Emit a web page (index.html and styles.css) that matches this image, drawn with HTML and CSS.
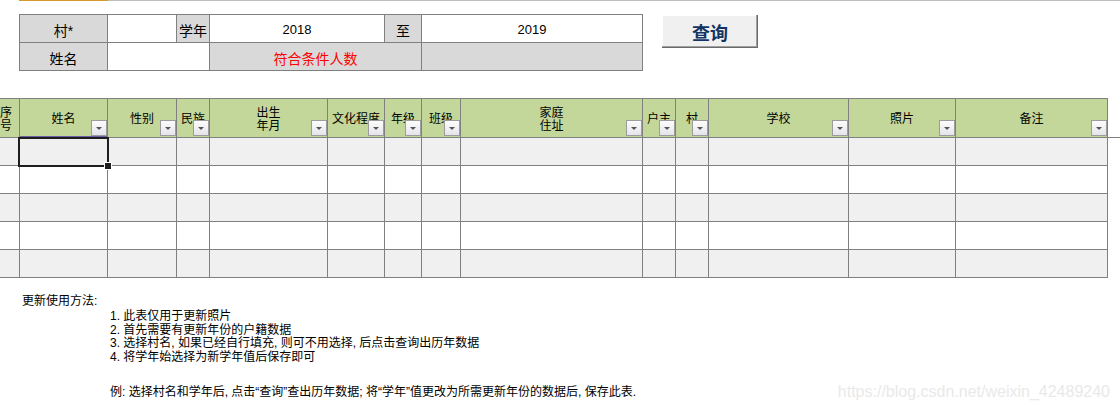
FILE: index.html
```html
<!DOCTYPE html>
<html lang="zh-CN">

<head>
  <meta charset="UTF-8">
  <meta name="viewport" content="width=device-width, initial-scale=1.0">
  <title>照片更新</title>

  <link rel="stylesheet" href="styles.css">
</head>

<body>
  <div class="top-bar">
    <span class="lead"></span>
    <span class="tab"></span>
    <span class="rule"></span>
  </div>

  <section class="query">
    <div class="form">
      <div class="cell label">村*</div>
      <div class="cell"></div>
      <div class="cell label">学年</div>
      <div class="cell num">2018</div>
      <div class="cell label">至</div>
      <div class="cell num">2019</div>
      <div class="cell label">姓名</div>
      <div class="cell span-2"></div>
      <div class="cell label span-2 count">符合条件人数</div>
      <div class="cell label"></div>
    </div>
    <button class="query-btn">查询</button>
  </section>

  <section class="sheet">
    <div class="hd first">序<br>号</div>
    <div class="hd on">姓名<span class="dd"></span></div>
    <div class="hd">性别<span class="dd"></span></div>
    <div class="hd">民族<span class="dd"></span></div>
    <div class="hd">出生<br>年月<span class="dd"></span></div>
    <div class="hd">文化程度<span class="dd"></span></div>
    <div class="hd">年级<span class="dd"></span></div>
    <div class="hd">班级<span class="dd"></span></div>
    <div class="hd">家庭<br>住址<span class="dd"></span></div>
    <div class="hd">户主<span class="dd"></span></div>
    <div class="hd">村<span class="dd"></span></div>
    <div class="hd">学校<span class="dd"></span></div>
    <div class="hd">照片<span class="dd"></span></div>
    <div class="hd">备注<span class="dd"></span></div>

    <div class="row shade">
      <div></div><div class="sel"></div><div></div><div></div><div></div><div></div><div></div>
      <div></div><div></div><div></div><div></div><div></div><div></div><div></div>
    </div>
    <div class="row">
      <div></div><div></div><div></div><div></div><div></div><div></div><div></div>
      <div></div><div></div><div></div><div></div><div></div><div></div><div></div>
    </div>
    <div class="row shade">
      <div></div><div></div><div></div><div></div><div></div><div></div><div></div>
      <div></div><div></div><div></div><div></div><div></div><div></div><div></div>
    </div>
    <div class="row">
      <div></div><div></div><div></div><div></div><div></div><div></div><div></div>
      <div></div><div></div><div></div><div></div><div></div><div></div><div></div>
    </div>
    <div class="row shade">
      <div></div><div></div><div></div><div></div><div></div><div></div><div></div>
      <div></div><div></div><div></div><div></div><div></div><div></div><div></div>
    </div>
  </section>

  <section class="notes">
    <p class="notes-title">更新使用方法:</p>
    <ul class="steps">
      <li>1. 此表仅用于更新照片</li>
      <li>2. 首先需要有更新年份的户籍数据</li>
      <li>3. 选择村名, 如果已经自行填充, 则可不用选择, 后点击查询出历年数据</li>
      <li>4. 将学年始选择为新学年值后保存即可</li>
    </ul>
    <div class="example">
      <p>例: 选择村名和学年后, 点击“查询”查出历年数据; 将“学年”值更改为所需更新年份的数据后, 保存此表.</p>
      <span class="mark">https://blog.csdn.net/weixin_42489240</span>
    </div>
  </section>
</body>

</html>
```

FILE: styles.css
```css
* {
  margin: 0;
  padding: 0;
  box-sizing: border-box;
}

body {
  width: 1120px;
  height: 414px;
  overflow: hidden;
  background-color: #fff;
  color: #000;
  font-family: "Liberation Sans", "Noto Sans CJK SC", sans-serif;
}

.top-bar {
  display: flex;
  height: 1px;
}

.top-bar .lead {
  width: 19px;
}

.top-bar .tab {
  width: 89px;
  background-color: #d6992b;
}

.top-bar .rule {
  flex: 1;
  background-color: #bdbdbd;
}

/* 查询区 */
.query {
  display: flex;
  align-items: flex-start;
  margin: 13px 0 0 19px;
}

.form {
  display: grid;
  grid-template-columns: 87px 68px 32px 174px 36px 220px;
  grid-template-rows: 27px 27px;
  gap: 1px;
  padding: 1px;
  background-color: #808080;
}

.form .cell {
  display: flex;
  align-items: center;
  justify-content: center;
  padding-top: 2px;
  background-color: #fff;
  font-size: 14px;
}

.form .label {
  background-color: #d9d9d9;
}

.form .num {
  font-size: 13px;
}

.span-2 {
  grid-column: span 2;
}

.count {
  color: #ff0000;
}

.query-btn {
  margin: 1px 0 0 19px;
  width: 96px;
  height: 33px;
  border: none;
  background-color: #f0f0f0;
  box-shadow: inset -1px -1px 0 #6a6a6a, inset -2px -2px 0 #a0a0a0, inset 1px 1px 0 #fff;
  color: #123461;
  font-family: "Noto Sans CJK SC", sans-serif;
  font-size: 18px;
  font-weight: bold;
  line-height: 1;
}

/* 数据表 */
.sheet {
  position: relative;
  margin-top: 27px;
  width: 1108px;
  display: grid;
  grid-template-columns: 19px 87px 68px 32px 117px 56px 36px 38px 181px 32px 32px 139px 106px 151px;
  grid-template-rows: 38px repeat(5, 27px);
  gap: 1px;
  padding: 1px 1px 1px 0;
  background-color: #808080;
}

/* 表头下边线延伸到窗口右侧 */
.sheet::after {
  content: "";
  position: absolute;
  top: 39px;
  left: 1108px;
  width: 12px;
  height: 1px;
  background-color: #808080;
}

.hd {
  position: relative;
  display: flex;
  align-items: center;
  justify-content: center;
  padding-top: 3px;
  overflow: hidden;
  white-space: nowrap;
  background-color: #c4d79b;
  font-size: 12px;
  line-height: 13px;
  text-align: center;
}

.hd.first {
  justify-content: flex-end;
  padding-right: 7px;
}

.hd.on {
  box-shadow: inset 0 -1px 0 #6d5ea3;
}

.dd {
  position: absolute;
  right: 0;
  bottom: 1px;
  width: 16px;
  height: 16px;
  border: 1px solid #9c9c9c;
  background: linear-gradient(#fdfdfd, #e4e4ec);
}

.dd::after {
  content: "";
  position: absolute;
  left: 4px;
  top: 6px;
  border-left: 3px solid transparent;
  border-right: 3px solid transparent;
  border-top: 3px solid #555;
}

.row {
  display: contents;
}

.row > div {
  background-color: #fff;
}

.row.shade > div {
  background-color: #f0f0f0;
}

.row > .sel {
  position: relative;
}

.sel::before {
  content: "";
  position: absolute;
  top: -1px;
  left: -2px;
  right: -2px;
  bottom: -2px;
  border: 2px solid #1e1e1e;
}

.sel::after {
  content: "";
  position: absolute;
  right: -5px;
  bottom: -5px;
  width: 6px;
  height: 6px;
  background-color: #1e1e1e;
  border: 1px solid #fff;
}

/* 说明 */
.notes {
  margin-top: 16px;
  padding-left: 22px;
  font-size: 12px;
}

.notes-title {
  line-height: 14px;
}

.steps {
  margin: 2px 0 0 88px;
  list-style: none;
  line-height: 13.5px;
}

.example {
  display: flex;
  align-items: center;
  margin: 21px 0 0 88px;
  line-height: 14px;
}

.mark {
  margin-left: auto;
  margin-right: 10px;
  color: #e9e9e9;
  font-size: 16px;
}
```
